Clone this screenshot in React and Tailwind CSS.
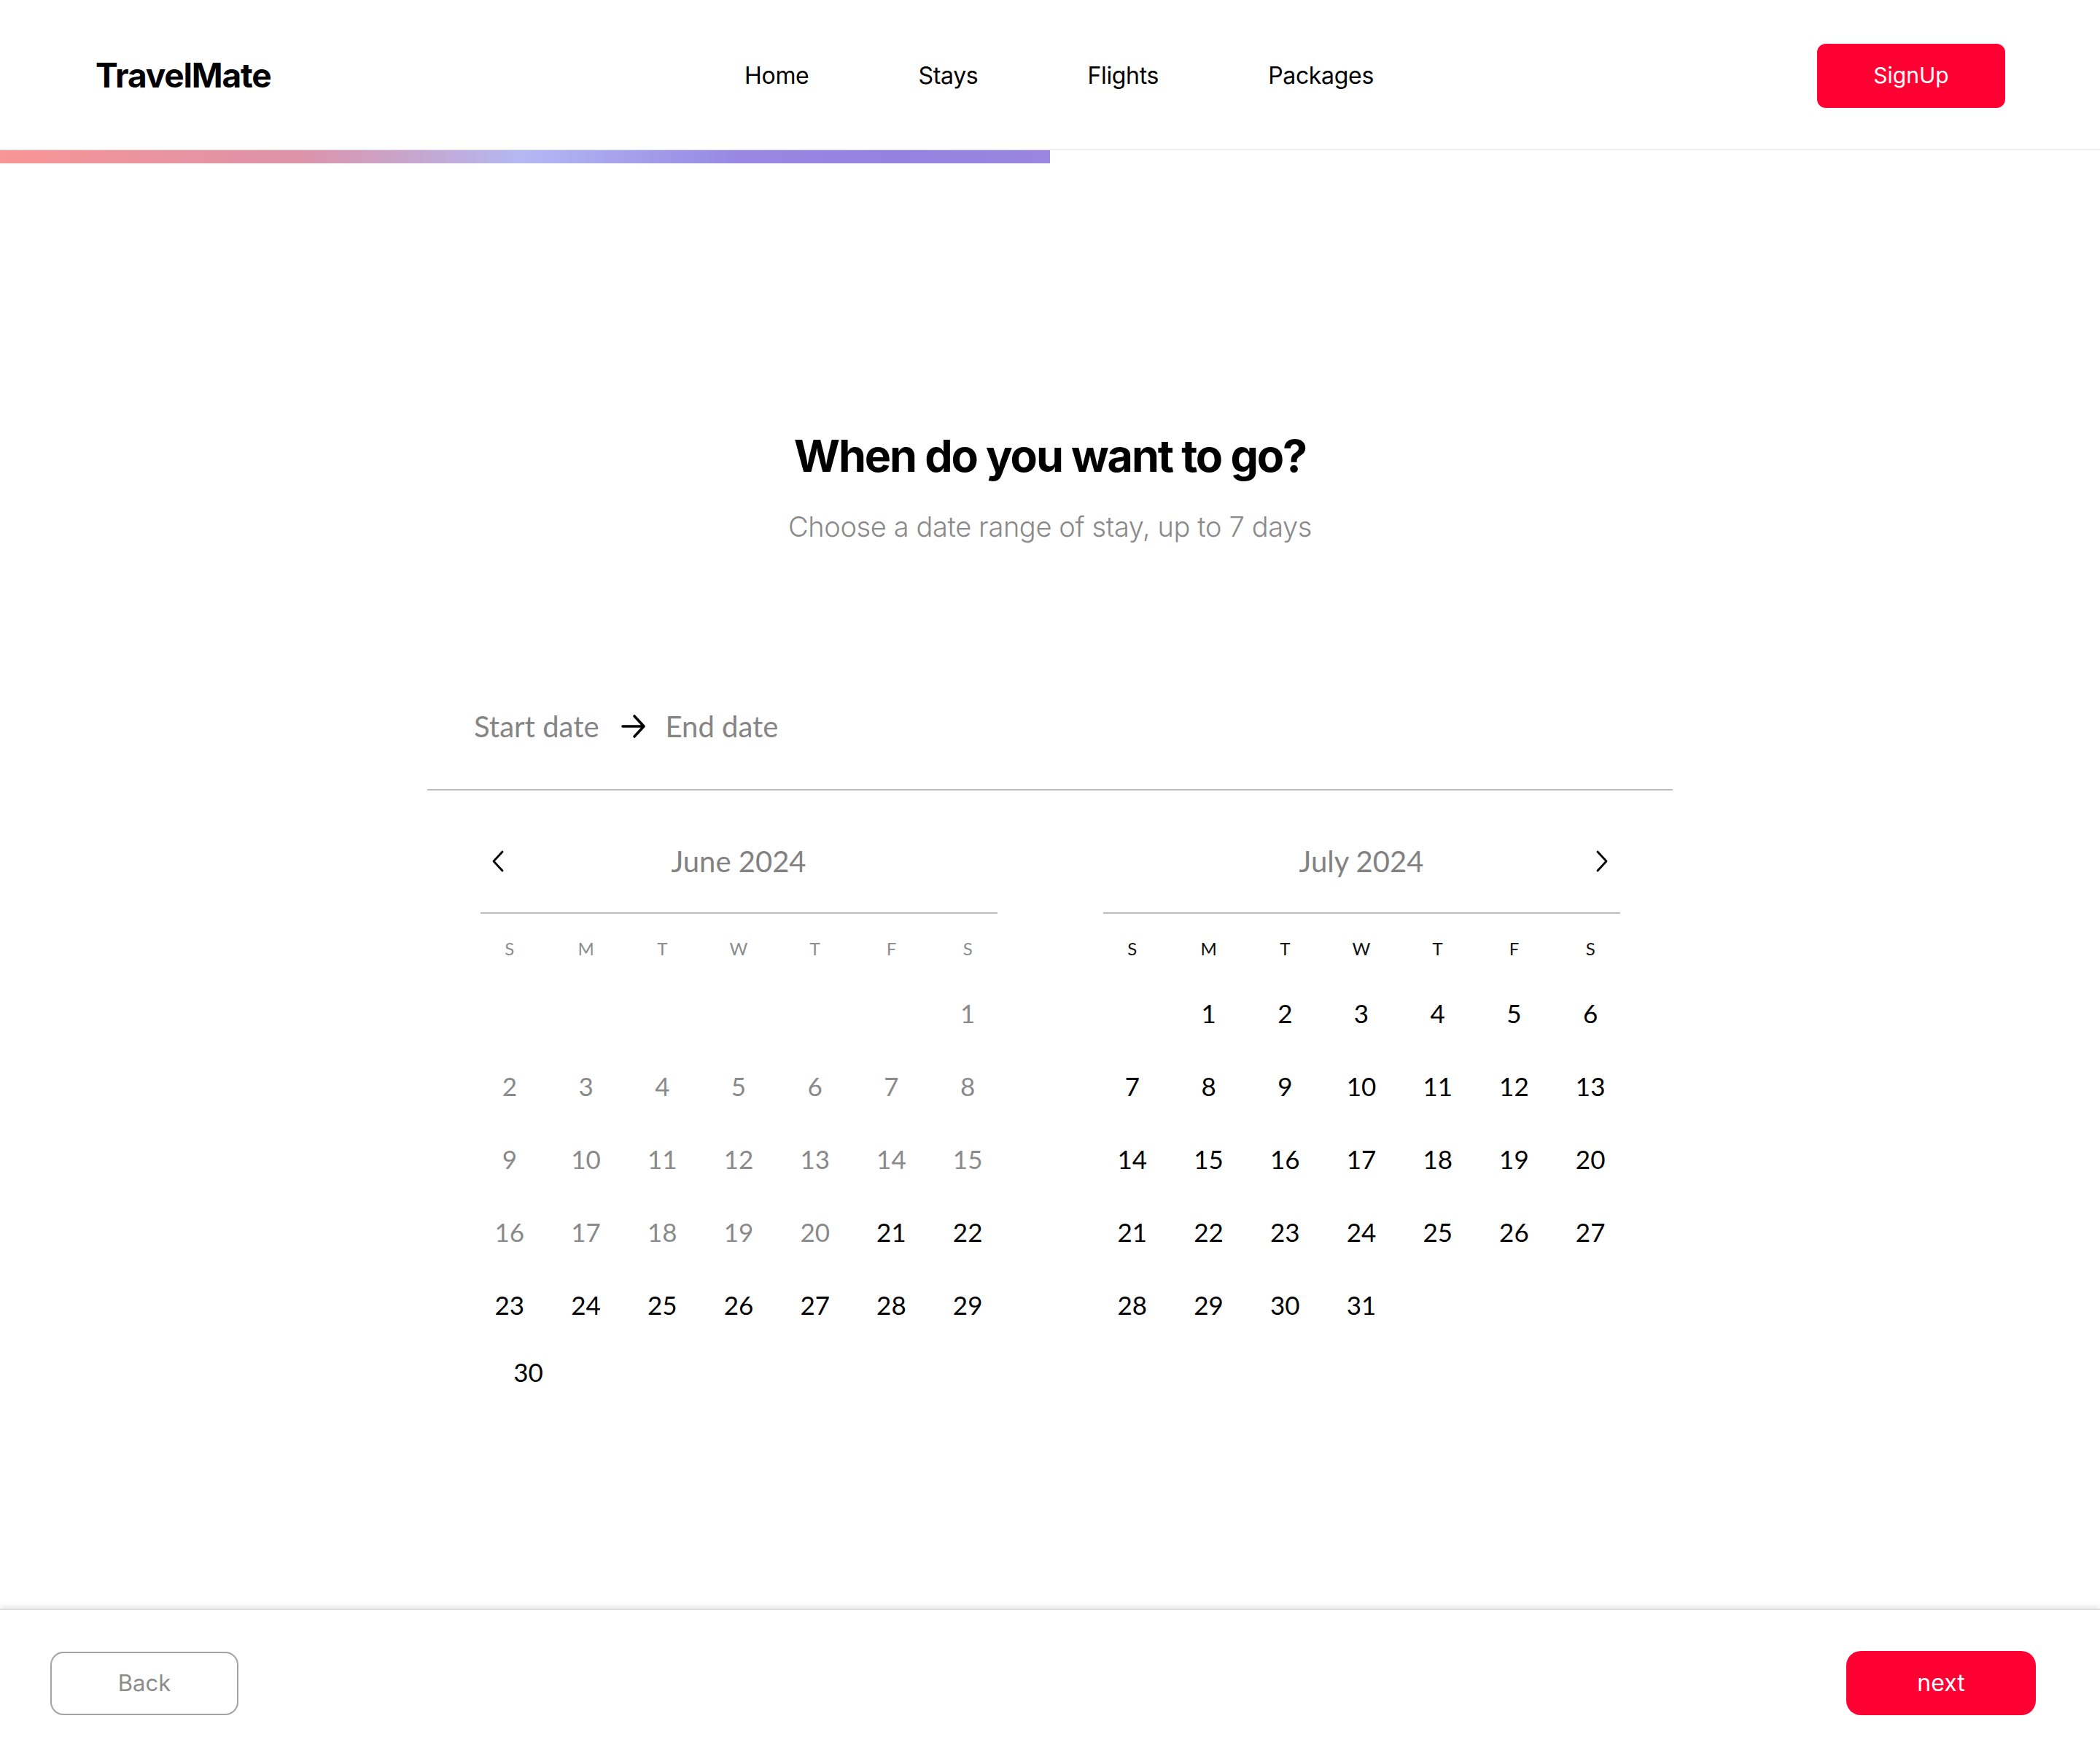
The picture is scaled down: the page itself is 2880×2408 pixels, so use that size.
import React from 'react';

const june = [
  [null, null, null, null, null, null, 1],
  [2, 3, 4, 5, 6, 7, 8],
  [9, 10, 11, 12, 13, 14, 15],
  [16, 17, 18, 19, 20, 21, 22],
  [23, 24, 25, 26, 27, 28, 29],
];

const july = [
  [null, 1, 2, 3, 4, 5, 6],
  [7, 8, 9, 10, 11, 12, 13],
  [14, 15, 16, 17, 18, 19, 20],
  [21, 22, 23, 24, 25, 26, 27],
  [28, 29, 30, 31, null, null, null],
];

const weekDays = ['S', 'M', 'T', 'W', 'T', 'F', 'S'];

function Chevron({ dir }) {
  return (
    <svg width="18" height="30" viewBox="0 0 18 30" fill="none">
      <path
        d={dir === 'left' ? 'M15 2 L3 15 L15 28' : 'M3 2 L15 15 L3 28'}
        stroke="#000"
        strokeWidth="2.8"
        strokeLinecap="round"
        strokeLinejoin="round"
      />
    </svg>
  );
}

function Month({ title, weeks, side, headColor, isPast, extraRow }) {
  return (
    <div className="w-[733px] font-['Lato',sans-serif]">
      <div className="grid grid-cols-3 items-center h-[50px]">
        <div className="flex pl-[27px]">{side === 'left' && <Chevron dir="left" />}</div>
        <div className="text-center text-[40px] leading-[50px] text-[#828282] whitespace-nowrap">{title}</div>
        <div className="flex justify-end pr-[27px]">{side === 'right' && <Chevron dir="right" />}</div>
      </div>
      <div className="mx-[12px] mt-[45px] h-[2px] bg-[#bdbdbd]" />
      <div className={`grid grid-cols-7 mt-[33px] text-[24px] leading-[30px] ${headColor}`}>
        {weekDays.map((d, i) => (
          <div key={i} className="text-center">{d}</div>
        ))}
      </div>
      <div className="mt-[23px]">
        {weeks.map((week, wi) => (
          <div key={wi} className="grid grid-cols-7 h-[100px]">
            {week.map((day, di) => (
              <div key={di} className="flex items-center justify-center">
                {day && (
                  <span
                    className={`text-[35px] leading-[42px] ${isPast(day) ? 'text-[#8a8a8a]' : 'text-black'}`}
                  >
                    {day}
                  </span>
                )}
              </div>
            ))}
          </div>
        ))}
        {extraRow && (
          <div className="flex h-[84px] items-center pl-[43px]">
            <span className="w-[70px] text-center text-[35px] leading-[42px] text-black">{extraRow}</span>
          </div>
        )}
      </div>
    </div>
  );
}

export default function App() {
  return (
    <div className="flex flex-col h-[2408px] bg-white font-['Inter',sans-serif] text-black">
      {/* top nav */}
      <header className="flex items-center h-[206px] pt-[3px] pl-[131px] pr-[130px] border-b-2 border-[#efefef]">
        <div className="flex-1">
          <span className="text-[46px] font-bold tracking-[-0.025em]">TravelMate</span>
        </div>
        <nav className="flex gap-[150px] text-[32px] tracking-[-0.01em] ml-[24px]">
          <a>Home</a>
          <a>Stays</a>
          <a>Flights</a>
          <a>Packages</a>
        </nav>
        <div className="flex flex-1 justify-end">
          <button className="w-[258px] h-[88px] rounded-[12px] bg-[#ff0033] text-white text-[30px]">
            SignUp
          </button>
        </div>
      </header>

      {/* progress */}
      <div className="h-[18px] w-1/2 bg-[linear-gradient(90deg,#f89595_0%,#dd92a8_28%,#b2b8f3_50%,#9888e3_70%,#9382e0_85%,#9a86e0_100%)]" />

      <main className="flex flex-1 flex-col items-center">
        <h1 className="mt-[364px] text-[61px] leading-[75px] font-bold tracking-[-0.035em]">
          When do you want to go?
        </h1>
        <p className="mt-[36px] text-[38px] leading-[46px] font-light tracking-[-0.01em] text-[#8a8a8a]">
          Choose a date range of stay, up to 7 days
        </p>

        <div className="w-[1708px] mt-[227px]">
          <div className="flex items-center pl-[64px] pb-[62px] border-b-2 border-[#bdbdbd] font-['Lato',sans-serif] text-[40px] leading-[48px] text-[#858585]">
            <span>Start date</span>
            <svg className="ml-[30px] mr-[27px]" width="34" height="34" viewBox="0 0 34 34" fill="none">
              <path d="M2 17 H31 M18 3 L31 17 L18 31" stroke="#000" strokeWidth="3.6" strokeLinecap="round" strokeLinejoin="round" />
            </svg>
            <span>End date</span>
          </div>

          <div className="flex justify-center gap-[121px] mt-[72px]">
            <Month
              title="June 2024"
              weeks={june}
              side="left"
              headColor="text-[#8c8c8c]"
              isPast={(d) => d < 21}
              extraRow={30}
            />
            <Month
              title="July 2024"
              weeks={july}
              side="right"
              headColor="text-[#111]"
              isPast={() => false}
            />
          </div>
        </div>
      </main>

      <footer className="flex items-center justify-between h-[202px] pl-[69px] pr-[88px] border-t-2 border-[#dedede] shadow-[0_-4px_6px_rgba(0,0,0,0.08)]">
        <button className="w-[258px] h-[87px] rounded-[18px] border-2 border-[#a3a3a3] text-[31px] text-[#8c8c8c]">
          Back
        </button>
        <button className="w-[260px] h-[88px] rounded-[20px] bg-[#ff0033] text-[32px] text-white">
          next
        </button>
      </footer>
    </div>
  );
}
